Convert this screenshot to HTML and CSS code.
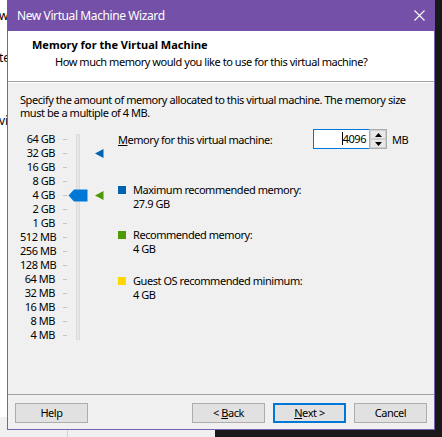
FILE: index.html
```html
<!DOCTYPE html>
<html>
<head>
<meta charset="utf-8">
<link rel="stylesheet" href="styles.css">
</head>
<body>
<div class="desktop">
  <div class="bgapp">
    <ul class="bglist">
      <li class="bg1">wi</li>
      <li class="bg2">ter</li>
      <li class="bg3">vi</li>
    </ul>
    <div class="bgstatus"><span class="bgcell"></span></div>
  </div>

  <div class="window">
    <div class="titlebar">
      <span class="title">New Virtual Machine Wizard</span>
      <svg class="close" width="11" height="11" viewBox="0 0 11 11"><path d="M0.5 0.5 L10.5 10.5 M10.5 0.5 L0.5 10.5" stroke="#fff" stroke-width="1.1"/></svg>
    </div>
    <div class="header">
      <div class="h-title">Memory for the Virtual Machine</div>
      <div class="h-sub">How much memory would you like to use for this virtual machine?</div>
    </div>
    <div class="content">
      <p class="desc">Specify the amount of memory allocated to this virtual machine. The memory size<br>must be a multiple of 4 MB.</p>
      <div class="main">
        <div class="slider">
          <div class="track"></div>
          <span class="lbl r1">64 GB</span><span class="tick r1"></span>
          <span class="lbl r2">32 GB</span><span class="tick r2"></span><svg class="mark r2" width="9" height="9" viewBox="0 0 9 9"><path d="M0 4.5 L8.5 0 L8.5 9 Z" fill="#0063b1"/></svg>
          <span class="lbl r3">16 GB</span><span class="tick r3"></span>
          <span class="lbl r4">8 GB</span><span class="tick r4"></span>
          <span class="lbl r5">4 GB</span><span class="tick r5"></span>
          <svg class="thumb r5" width="20" height="13" viewBox="0 0 20 13"><path d="M0.5 6.5 L6 0.5 L19.5 0.5 L19.5 12.5 L6 12.5 Z" fill="#0078d7"/></svg>
          <svg class="mark r5" width="9" height="9" viewBox="0 0 9 9"><path d="M0 4.5 L8.5 0 L8.5 9 Z" fill="#4e9a06"/></svg>
          <span class="lbl r6">2 GB</span><span class="tick r6"></span>
          <span class="lbl r7">1 GB</span><span class="tick r7"></span>
          <span class="lbl r8">512 MB</span><span class="tick r8"></span>
          <span class="lbl r9">256 MB</span><span class="tick r9"></span>
          <span class="lbl r10">128 MB</span><span class="tick r10"></span>
          <span class="lbl r11">64 MB</span><span class="tick r11"></span>
          <span class="lbl r12">32 MB</span><span class="tick r12"></span>
          <span class="lbl r13">16 MB</span><span class="tick r13"></span>
          <span class="lbl r14">8 MB</span><span class="tick r14"></span>
          <span class="lbl r15">4 MB</span><span class="tick r15"></span>
        </div>
        <div class="info">
          <div class="memrow">
            <span class="memlabel"><u>M</u>emory for this virtual machine:</span>
            <div class="spin">
              <div class="field"><span class="caret"></span>4096</div>
              <div class="arrows">
                <div class="arr"><svg width="7" height="4" viewBox="0 0 7 4"><path d="M3.5 0 L7 4 L0 4 Z" fill="#000"/></svg></div>
                <div class="arr"><svg width="7" height="4" viewBox="0 0 7 4"><path d="M0 0 L7 0 L3.5 4 Z" fill="#000"/></svg></div>
              </div>
            </div>
            <span class="unit">MB</span>
          </div>
          <div class="legend l1">
            <span class="sq blue"></span>
            <div class="ltext">Maximum recommended memory:<br>27.9 GB</div>
          </div>
          <div class="legend l2">
            <span class="sq green"></span>
            <div class="ltext">Recommended memory:<br>4 GB</div>
          </div>
          <div class="legend l3">
            <span class="sq yellow"></span>
            <div class="ltext">Guest OS recommended minimum:<br>4 GB</div>
          </div>
        </div>
      </div>
    </div>
    <div class="footer">
      <button class="btn">Help</button>
      <div class="spacer"></div>
      <button class="btn">&lt; <u>B</u>ack</button>
      <button class="btn primary"><u>N</u>ext &gt;</button>
      <button class="btn">Cancel</button>
    </div>
  </div>
</div>
</body>
</html>
```

FILE: styles.css
```css
html, body {
  margin: 0;
  padding: 0;
}
body {
  width: 442px;
  height: 437px;
  overflow: hidden;
  background: #191919;
  font-family: "Noto Sans", sans-serif;
  font-size: 11px;
  letter-spacing: -0.45px;
  color: #000;
}
.desktop {
  position: relative;
  width: 442px;
  height: 437px;
}
.bgapp {
  width: 215px;
  height: 437px;
  display: flex;
  flex-direction: column;
  background: #fff;
}
.bglist {
  list-style: none;
  margin: 0;
  padding: 0;
  flex: 1;
  font-size: 12px;
  letter-spacing: 0;
}
.bglist li {
  height: 14px;
  line-height: 14px;
  margin-left: -1px;
}
.bg1 { margin-top: 9px; }
.bg2 { margin-top: 28px; }
.bg3 { margin-top: 49px; }
.bgstatus {
  height: 20px;
  background: #f0f0f0;
  display: flex;
}
.bgcell {
  width: 67px;
  border-right: 1px solid #d4d4d4;
}

.window {
  position: absolute;
  left: 7px;
  top: 0;
  width: 428px;
  height: 430px;
  box-sizing: border-box;
  border: 1px solid #7a62b2;
  border-top: none;
  background: #f0f0f0;
  display: flex;
  flex-direction: column;
}
.titlebar {
  height: 31px;
  background: #7450a8;
  margin: 0 -1px;
  display: flex;
  align-items: center;
  padding: 0 10px 0 10px;
  color: #fff;
  font-size: 12px;
  letter-spacing: -0.4px;
}
.title {
  flex: 1;
  padding-bottom: 1px;
}
.header {
  height: 51px;
  background: #fff;
  border-bottom: 1px solid #a0a0a0;
  box-sizing: border-box;
  padding-top: 7px;
}
.h-title {
  font-weight: bold;
  padding-left: 24px;
  line-height: 14px;
  letter-spacing: 0;
}
.h-sub {
  padding-left: 47px;
  line-height: 14px;
  margin-top: 3px;
}
.content {
  flex: 1;
  border-top: 1px solid #fff;
  padding: 10px 0 0 12px;
}
.desc {
  margin: 0;
  line-height: 13px;
  white-space: nowrap;
}
.main {
  display: flex;
  align-items: flex-start;
  margin-top: 10px;
}
.slider {
  display: grid;
  grid-template-columns: 35px 8px 4px 1px 19px 8px 8px;
  grid-template-rows: repeat(15, 14px);
  margin-top: 3px;
}
.lbl {
  grid-column: 1;
  text-align: right;
  line-height: 14px;
  white-space: nowrap;
  direction: rtl;
  unicode-bidi: plaintext;
}
.tick {
  grid-column: 3;
  align-self: center;
  height: 1px;
  background: #c4c4c4;
}
.track {
  grid-column: 5;
  grid-row: 1 / 16;
  justify-self: center;
  margin: 2px 0;
  width: 2px;
  border: 1px solid #dcdcdc;
  background: #e7e7e7;
}
.thumb {
  grid-column: 5;
  align-self: center;
  justify-self: start;
}
.mark {
  grid-column: 7;
  align-self: center;
}
.r1 { grid-row: 1; } .r2 { grid-row: 2; } .r3 { grid-row: 3; } .r4 { grid-row: 4; }
.r5 { grid-row: 5; } .r6 { grid-row: 6; } .r7 { grid-row: 7; } .r8 { grid-row: 8; }
.r9 { grid-row: 9; } .r10 { grid-row: 10; } .r11 { grid-row: 11; } .r12 { grid-row: 12; }
.r13 { grid-row: 13; } .r14 { grid-row: 14; } .r15 { grid-row: 15; }

.info {
  margin-left: 15px;
  display: flex;
  flex-direction: column;
}
.memrow {
  display: flex;
  align-items: center;
  height: 20px;
}
.memlabel {
  width: 195px;
}
.spin {
  display: flex;
  height: 20px;
}
.field {
  width: 52px;
  height: 18px;
  border: 1px solid #0078d7;
  border-right: none;
  background: #fff;
  text-align: right;
  line-height: 18px;
  padding-right: 3px;
}
.caret {
  display: inline-block;
  width: 1px;
  height: 13px;
  background: #000;
  vertical-align: -2px;
}
.arrows {
  width: 16px;
  height: 18px;
  border: 1px solid #adadad;
  display: flex;
  flex-direction: column;
  background: #f0f0f0;
}
.arr {
  flex: 1;
  display: flex;
  align-items: center;
  justify-content: center;
  background: #e8e8e8;
  border: 1px solid #d0d0d0;
}
.unit {
  margin-left: 5px;
}
.legend {
  display: flex;
  align-items: flex-start;
}
.l1 { margin-top: 34px; }
.l2 { margin-top: 17px; }
.l3 { margin-top: 18px; }
.sq {
  width: 8px;
  height: 8px;
  margin-top: 3px;
  margin-right: 7px;
}
.blue { background: #0063b1; }
.green { background: #4e9a06; }
.yellow { background: #ffd800; }
.ltext {
  line-height: 14px;
}

.footer {
  height: 35px;
  border-top: 1px solid #a0a0a0;
  display: flex;
  align-items: flex-start;
  padding: 8px 7px 0 7px;
  gap: 8px;
  box-sizing: border-box;
}
.spacer { flex: 1; }
.btn {
  width: 73px;
  height: 20px;
  box-sizing: border-box;
  border: 1px solid #adadad;
  background: #e1e1e1;
  font-family: "Noto Sans", sans-serif;
  font-size: 11px;
  letter-spacing: -0.45px;
  color: #000;
  padding: 0;
  line-height: 16px;
}
.primary {
  border: 2px solid #0078d7;
}
```
